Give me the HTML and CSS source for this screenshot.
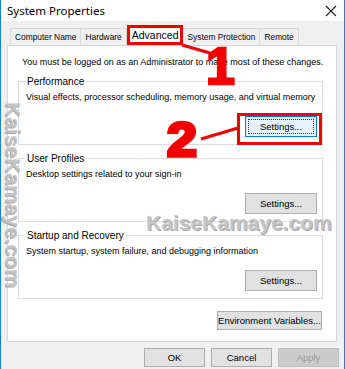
FILE: index.html
```html
<!DOCTYPE html>
<html lang="en">
<head>
  <meta charset="UTF-8" />
  <title>System Properties</title>
  <link rel="stylesheet" href="styles.css">
</head>
<body>

  <div class="window">
    <div class="titlebar">
      <span class="title">System Properties</span>
      <svg class="close" width="12" height="12" viewBox="0 0 12 12">
        <path d="M1 1 L11 11 M11 1 L1 11" stroke="#222" stroke-width="1.1" fill="none"/>
      </svg>
    </div>

    <div class="tabs">
      <div class="tab">Computer Name</div>
      <div class="tab">Hardware</div>
      <div class="tab active">Advanced</div>
      <div class="tab">System Protection</div>
      <div class="tab">Remote</div>
    </div>

    <div class="panel">
      <p class="notice">You must be logged on as an Administrator to make most of these changes.</p>

      <fieldset class="group">
        <legend>Performance</legend>
        <p>Visual effects, processor scheduling, memory usage, and virtual memory</p>
        <div class="row"><button class="btn focused">Settings...</button></div>
      </fieldset>

      <fieldset class="group">
        <legend>User Profiles</legend>
        <p>Desktop settings related to your sign-in</p>
        <div class="row"><button class="btn">Settings...</button></div>
      </fieldset>

      <fieldset class="group">
        <legend>Startup and Recovery</legend>
        <p>System startup, system failure, and debugging information</p>
        <div class="row"><button class="btn">Settings...</button></div>
      </fieldset>

      <div class="row env"><button class="btn">Environment Variables...</button></div>
    </div>

    <div class="footer">
      <button class="btn">OK</button>
      <button class="btn">Cancel</button>
      <button class="btn" disabled>Apply</button>
    </div>

    <!-- watermark + annotations drawn over the dialog -->
    <div class="mark mark-h">KaiseKamaye.com</div>
    <div class="mark mark-v">KaiseKamaye.com</div>

    <svg class="arrows" width="345" height="369">
      <line x1="182" y1="45" x2="210" y2="53" stroke="#f00000" stroke-width="3"/>
      <line x1="201" y1="139" x2="238" y2="128" stroke="#f00000" stroke-width="3"/>
      <rect x="238.5" y="114.5" width="82" height="29" fill="none" stroke="#f00000" stroke-width="3"/>
    </svg>
    <span class="num num1">1</span>
    <span class="num num2">2</span>
  </div>

</body>
</html>
```

FILE: styles.css
```css
body {
  margin: 0;
  font-family: "Liberation Sans", Arial, sans-serif;
  font-size: 9px;
  color: #000;
  background: #f0f0f0;
}

.window {
  position: relative;
  width: 345px;
  height: 369px;
  box-sizing: border-box;
  border-left: 1px solid #1883d7;
  border-right: 1px solid #1883d7;
  background: #f0f0f0;
  overflow: hidden;
  white-space: nowrap;
}

.titlebar {
  height: 21px;
  background: #fff;
  display: flex;
  align-items: center;
  justify-content: space-between;
  padding: 0 7px 0 6px;
}

.title {
  font-family: "Noto Sans", sans-serif;
  font-size: 11.5px;
  color: #000;
}

/* tabs */
.tabs {
  display: flex;
  align-items: flex-end;
  height: 24px;
  padding-left: 9px;
}

.tab {
  height: 17px;
  box-sizing: border-box;
  border: 1px solid #d9d9d9;
  border-bottom: none;
  margin-right: -1px;
  padding: 0 4px;
  font-size: 8.4px;
  line-height: 16px;
  background: #f0f0f0;
}

.tab.active {
  height: 20px;
  margin: 0 -1px 0 1px;
  padding: 0 2px;
  border: 3px solid #f00000;
  background: #fff;
  font-size: 10.5px;
  line-height: 14px;
  position: relative;
}

.panel {
  height: 297px;
  box-sizing: border-box;
  margin: 0 7px 0 6px;
  background: #fff;
  border: 1px solid #d9d9d9;
}

.notice {
  margin: 0;
  padding: 10px 0 0 14px;
  line-height: 13px;
}

.group {
  margin: 6px 13px 0 10px;
  padding: 0 5px 7px 7px;
  border: 1px solid #dcdcdc;
}

.group + .group {
  margin-top: 7px;
}

.group legend {
  padding: 0 2px;
  margin-left: -1px;
  font-size: 10px;
  line-height: 13px;
}

.group p {
  margin: 3px 0 0 0;
  line-height: 13px;
}

.row {
  display: flex;
  justify-content: flex-end;
  margin-top: 12px;
}

.btn {
  font-family: inherit;
  font-size: 9.5px;
  color: #000;
  background: #e1e1e1;
  border: 1px solid #adadad;
  padding: 0;
  width: 72px;
  height: 21px;
}

.btn.focused {
  background: #e5f1fb;
  border-color: #0078d7;
  outline: 1px dotted #333;
  outline-offset: -4px;
}

.env {
  margin: 12px 14px 0 0;
}

.env .btn {
  width: 105px;
  height: 19px;
}

.footer {
  display: flex;
  justify-content: flex-end;
  gap: 6px;
  padding: 6px 5px 0 0;
}

.footer .btn {
  width: 61px;
  height: 19px;
}

.footer .btn:disabled {
  background: #cccccc;
  border-color: #bfbfbf;
  color: #9a9a9a;
}

/* watermark */
.mark {
  position: absolute;
  font-weight: bold;
  font-size: 21px;
  line-height: 1;
  color: #c4c4c4;
  text-shadow: 1px 1px 0 #a8a8a8;
}

.mark-h {
  left: 145px;
  top: 212px;
}

.mark-v {
  left: 2px;
  top: 102px;
  writing-mode: vertical-rl;
}

/* red annotations */
.arrows {
  position: absolute;
  left: -1px;
  top: 0;
}

.num {
  position: absolute;
  font-weight: bold;
  line-height: 1;
  color: #f00000;
  -webkit-text-stroke: 2.5px #f00000;
}

.num1 {
  left: 205px;
  top: 40px;
  font-size: 52px;
}

.num2 {
  left: 166px;
  top: 116px;
  font-size: 48px;
  -webkit-text-stroke: 3.5px #f00000;
  transform: scaleX(1.12);
  transform-origin: left top;
}
```
